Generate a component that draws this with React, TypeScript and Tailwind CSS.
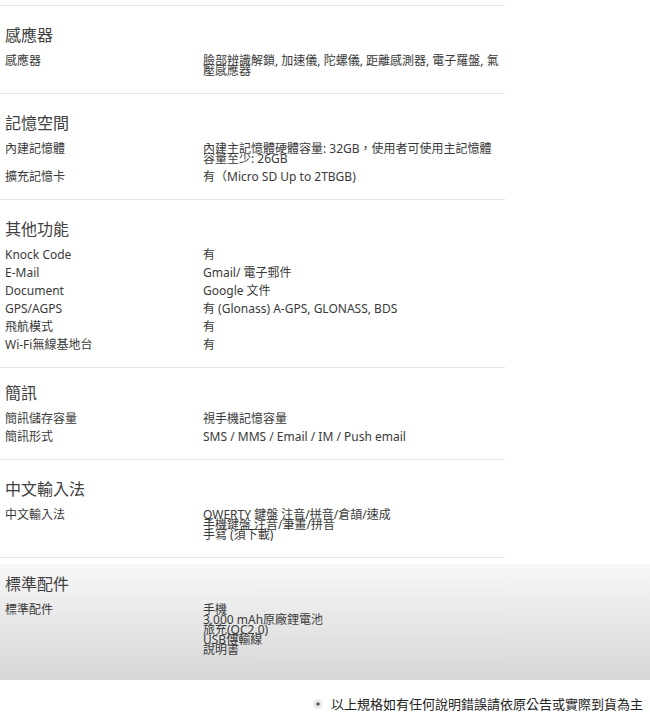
type Row = { label: string; value: string[] };
type Section = { title: string; rows: Row[]; top?: string };

const sections: Section[] = [
  {
    title: "感應器",
    rows: [
      {
        label: "感應器",
        value: ["臉部辨識解鎖, 加速儀, 陀螺儀, 距離感測器, 電子羅盤, 氣", "壓感應器"],
      },
    ],
  },
  {
    title: "記憶空間",
    rows: [
      { label: "內建記憶體", value: ["內建主記憶體硬體容量: 32GB，使用者可使用主記憶體", "容量至少: 26GB"] },
      { label: "擴充記憶卡", value: ["有（Micro SD Up to 2TBGB)"] },
    ],
  },
  {
    title: "其他功能",
    rows: [
      { label: "Knock Code", value: ["有"] },
      { label: "E-Mail", value: ["Gmail/ 電子郵件"] },
      { label: "Document", value: ["Google 文件"] },
      { label: "GPS/AGPS", value: ["有 (Glonass) A-GPS, GLONASS, BDS"] },
      { label: "飛航模式", value: ["有"] },
      { label: "Wi-Fi無線基地台", value: ["有"] },
    ],
  },
  {
    title: "簡訊",
    top: "pt-[15px]",
    rows: [
      { label: "簡訊儲存容量", value: ["視手機記憶容量"] },
      { label: "簡訊形式", value: ["SMS / MMS / Email / IM / Push email"] },
    ],
  },
  {
    title: "中文輸入法",
    rows: [
      {
        label: "中文輸入法",
        value: ["QWERTY 鍵盤 注音/拼音/倉頡/速成", "手機鍵盤 注音/筆畫/拼音", "手寫 (須下載)"],
      },
    ],
  },
];

const accessories: Row = {
  label: "標準配件",
  value: ["手機", "3,000 mAh原廠鋰電池", "旅充(QC2.0)", "USB傳輸線", "說明書"],
};

const font = { fontFamily: '"Noto Sans", "Noto Sans CJK TC", sans-serif' };

function SpecRow({ row }: { row: Row }) {
  return (
    <div className="flex py-[4px] text-[12px] leading-[10px] text-[#3a3a3a]">
      <div className="w-[198px] h-[10px] shrink-0 whitespace-nowrap">{row.label}</div>
      <div className="whitespace-nowrap">
        {row.value.map((line, i) => (
          <div key={i} className="h-[10px]">
            {line}
          </div>
        ))}
      </div>
    </div>
  );
}

function Heading({ text }: { text: string }) {
  return <div className="h-[20px] text-[16px] leading-[20px] text-[#404040] mb-[7px]">{text}</div>;
}

export default function App() {
  return (
    <div className="w-[650px] h-[727px] bg-white overflow-hidden" style={font}>
      <div className="pt-[5px]">
        <div className="w-[505px] border-t border-[#e3e3e3]">
          {sections.map((s) => (
            <div key={s.title} className={`${s.top ?? "pt-[19px]"} pb-[13px] pl-[5px] border-b border-[#e3e3e3]`}>
              <Heading text={s.title} />
              {s.rows.map((r) => (
                <SpecRow key={r.label} row={r} />
              ))}
            </div>
          ))}
        </div>
      </div>
      <div className="mt-[6px] pt-[10px] pb-[21px] pl-[5px] bg-gradient-to-b from-[#f8f8f8] to-[#d6d6d6]">
        <Heading text="標準配件" />
        <SpecRow row={accessories} />
      </div>
      <div className="flex justify-end items-center gap-[8px] pr-[7px] mt-[16px]">
        <svg width="10" height="10" viewBox="0 0 10 10">
          <circle cx="5" cy="5" r="4.5" fill="#e4e4e4" />
          <circle cx="5" cy="5" r="3" fill="#f4f4f4" />
          <circle cx="5" cy="5" r="1.8" fill="#555" />
        </svg>
        <span className="h-[16px] text-[13px] leading-[16px] text-[#222]">以上規格如有任何說明錯誤請依原公告或實際到貨為主</span>
      </div>
    </div>
  );
}
